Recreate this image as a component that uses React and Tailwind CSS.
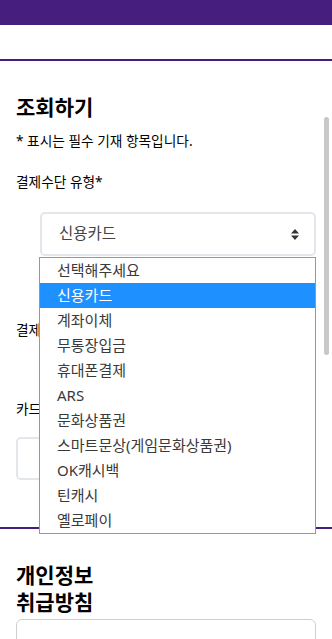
import React from "react";

const options = [
  "선택해주세요",
  "신용카드",
  "계좌이체",
  "무통장입금",
  "휴대폰결제",
  "ARS",
  "문화상품권",
  "스마트문상(게임문화상품권)",
  "OK캐시백",
  "틴캐시",
  "옐로페이",
];

function UpDown() {
  return (
    <svg width="8" height="11" viewBox="0 0 8 11" className="shrink-0">
      <path d="M4 0 L8 4.5 L0 4.5 Z" fill="#333" />
      <path d="M0 6.5 L8 6.5 L4 11 Z" fill="#333" />
    </svg>
  );
}

export default function App() {
  return (
    <div
      className="relative w-full min-h-screen bg-white text-black overflow-hidden"
      style={{ fontFamily: '"Noto Sans", "Noto Sans CJK KR", sans-serif' }}
    >
      {/* Top bar */}
      <div className="h-[25px] bg-[#461e7d]" />
      <div className="h-[36px] border-b-2 border-[#461e7d]" />

      {/* Lookup form */}
      <div className="px-4 pt-[32px] pb-[47px] border-b-2 border-[#461e7d]">
        <h2 className="text-[21px] leading-[28px] font-bold">조회하기</h2>
        <p className="mt-[10px] text-[13.7px] leading-[20px]">* 표시는 필수 기재 항목입니다.</p>

        <p className="mt-[21px] text-[13.7px] leading-[20px]">결제수단 유형*</p>

        <div className="relative ml-6 mt-[20px]">
          <div className="h-[44px] flex items-center justify-between pl-[17px] pr-[15px] border-2 border-[#e3e6ea] rounded-[5px] text-[15.5px] text-[#444]">
            <span>신용카드</span>
            <UpDown />
          </div>

          {/* Open dropdown */}
          <ul className="absolute left-[-1px] right-0 top-[45px] z-10 bg-white border border-[#7b9ad8]">
            {options.map((o, i) => (
              <li
                key={o}
                className={
                  "h-[25px] flex items-center pl-[17px] text-[15px] " +
                  (i === 1 ? "bg-[#1e90ff] text-white" : "text-[#3a3a3a]")
                }
              >
                {o}
              </li>
            ))}
          </ul>
        </div>

        <p className="mt-[64px] text-[13.7px] leading-[20px]">결제수단 선택*</p>
        <div className="ml-6 mt-[10px] h-[44px] border-2 border-[#e3e6ea] rounded-[5px]" />

        <p className="mt-[5px] text-[13.7px] leading-[20px]">카드번호*</p>
        <div className="mt-[18px] h-[43px] border-2 border-[#e3e6ea] rounded-[5px]" />
      </div>

      {/* Privacy policy */}
      <div className="px-4 pt-[33px]">
        <h2 className="text-[21px] leading-[27px] font-bold">
          개인정보
          <br />
          취급방침
        </h2>
        <div className="mt-[3px] h-[80px] border border-[#cfcfcf] rounded-[6px]" />
      </div>

      {/* Inner scrollbar thumb */}
      <div className="absolute right-[3px] top-[117px] w-[5px] h-[238px] rounded-full bg-[#c8c8c8]" />
    </div>
  );
}
